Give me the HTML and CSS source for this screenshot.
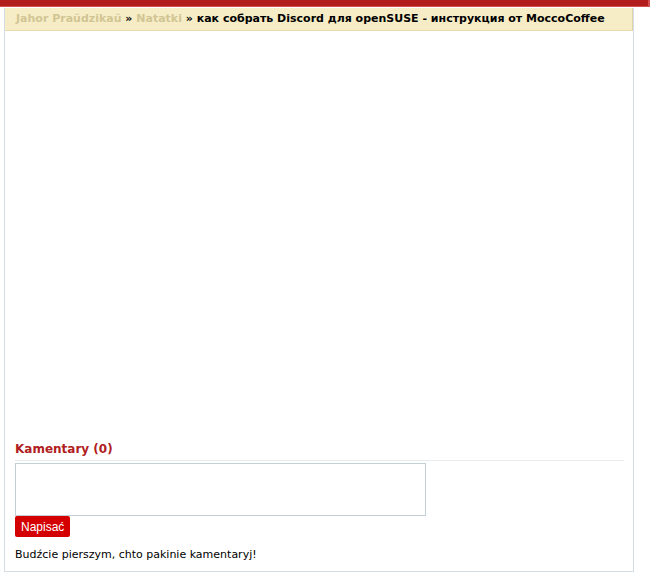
FILE: index.html
```html
<!DOCTYPE html>
<html lang="be">
<head>
    <meta charset="UTF-8">
    <title>как собрать Discord для openSUSE - инструкция от MoccoCoffee</title>
    <link rel="stylesheet" href="styles.css">
</head>
<body>
    <div class="topbar"></div>
    <div class="page">
        <div class="crumbs">
            <a href="#">Jahor Praŭdzikaŭ</a> » <a href="#">Natatki</a> » как собрать Discord для openSUSE - инструкция от MoccoCoffee
        </div>
        <div class="content"></div>
        <div class="comments">
            <h3>Kamentary (0)</h3>
            <textarea class="comment-box"></textarea>
            <button class="send">Napisać</button>
            <p class="empty">Budźcie pierszym, chto pakinie kamentaryj!</p>
        </div>
    </div>
</body>
</html>
```

FILE: styles.css
```css
body {
    margin: 0;
    padding: 0;
    background: #fff;
    font-family: "DejaVu Sans", Verdana, sans-serif;
    font-size: 11px;
    color: #000;
}

.topbar {
    width: 648px;
    height: 6px;
    background: #b21c1c;
    border-right: 2px solid #d45050;
    border-bottom: 1px solid #d45050;
}

.page {
    width: 628px;
    margin: 1px 0 0 4px;
    border: 1px solid #d4dde3;
    border-top: none;
}

.crumbs {
    height: 22px;
    line-height: 22px;
    padding: 0 0 0 11px;
    background: #f6edc6;
    border-right: 1px solid #e0d6a8;
    border-bottom: 1px solid #e6dcb0;
    font-weight: bold;
    white-space: nowrap;
}
.crumbs a {
    color: #d2c594;
    text-decoration: none;
}

.content {
    height: 410px;
}

.comments {
    padding: 0 9px 10px 10px;
}
.comments h3 {
    margin: 0 0 2px;
    padding-bottom: 3px;
    font-size: 12px;
    line-height: 16px;
    color: #b02020;
    border-bottom: 1px solid #e8ecef;
}

.comment-box {
    display: block;
    width: 409px;
    height: 51px;
    margin: 0;
    padding: 0;
    border: 1px solid #c3cfd6;
    resize: none;
}

.send {
    display: block;
    height: 21px;
    padding: 0 6px;
    border: none;
    border-radius: 2px;
    background: #d40000;
    color: #fff;
    font-family: "Liberation Sans", Arial, sans-serif;
    font-size: 12px;
}

.empty {
    margin: 11px 0 0;
}
```
